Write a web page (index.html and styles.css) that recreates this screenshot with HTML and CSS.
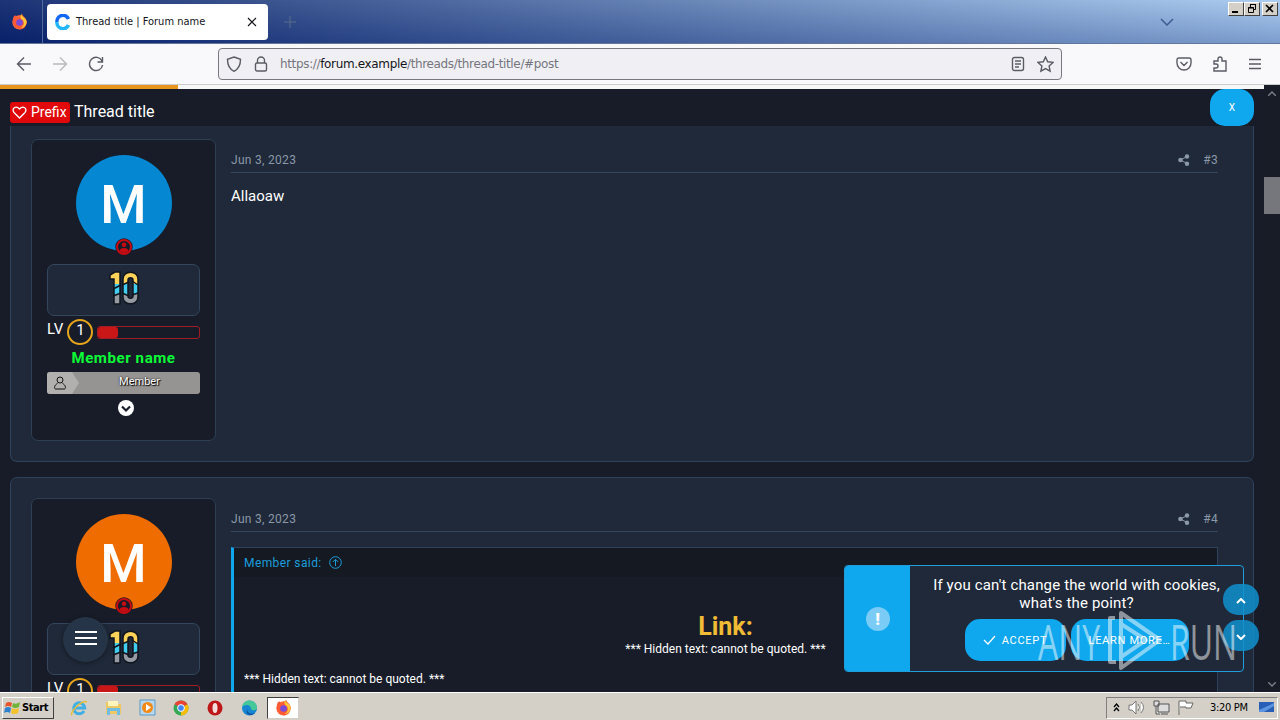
FILE: index.html
```html
<!DOCTYPE html>
<html lang="en">
<head>
    <meta charset="UTF-8">
    <meta name="viewport" content="width=device-width, initial-scale=1.0">
    <title>Forum thread</title>
    <link rel="stylesheet" href="styles.css">
</head>
<body>
    <svg class="defs" width="0" height="0">
        <symbol id="firefox" viewBox="0 0 18 18">
            <circle cx="9" cy="10" r="7.5" fill="#ff7139"/>
            <path d="M2 7C2 4 4 2 5 3l2 2c2-1 3-3 5-4 0 3 5 4 4.500 9C16 15 12 18 8 17 4 16 1 12 2 7z" fill="#ff5a36"/>
            <path d="M11 1c0 3 5 4 5.500 8 0 4-3 7-6 7 4-3 4-7 1-9-2-2-2-4-.5-6z" fill="#ffc738"/>
            <circle cx="9" cy="10" r="3.500" fill="#7a4bd8"/>
        </symbol>
        <symbol id="share" viewBox="0 0 12 12">
            <path d="M2.500 6L9 2.500M2.500 6L9 9.500" stroke="currentColor"/>
            <g fill="currentColor"><circle cx="2.500" cy="6" r="2.300"/><circle cx="9" cy="2.500" r="2.200"/><circle cx="9" cy="9.700" r="2.200"/></g>
        </symbol>
        <symbol id="online" viewBox="0 0 18 18">
            <circle cx="9" cy="9" r="8.700" fill="#171c28"/>
            <circle cx="9" cy="9" r="7" fill="#171c28" stroke="#c70b12" stroke-width="2"/>
            <circle cx="9" cy="6.800" r="2.300" fill="#c70b12"/>
            <path d="M4.500 13c0-4 9-4 9 0-2 2.500-7 2.500-9 0z" fill="#c70b12"/>
        </symbol>
        <symbol id="ten" viewBox="0 0 30 36">
            <defs>
                <linearGradient id="tenFill" x1="0" y1="0" x2="0" y2="36" gradientUnits="userSpaceOnUse">
                    <stop offset=".4" stop-color="#ffd25a"/><stop offset=".4" stop-color="#41cdf0"/>
                    <stop offset=".68" stop-color="#41cdf0"/><stop offset=".68" stop-color="#969ba3"/>
                </linearGradient>
            </defs>
            <path d="M1 5l5-3h5v32H5V9H1z" fill="url(#tenFill)" stroke="#10151e" stroke-width="1.500"/>
            <path d="M14 9c0-9 15-9 15 0v18c0 9-15 9-15 0zM19 10v16c0 3 5 3 5 0V10c0-3-5-3-5 0z" fill="url(#tenFill)" fill-rule="evenodd" stroke="#10151e" stroke-width="1.500"/>
            <path d="M4 19l8-4M13 15l7-3M23 11l6 4M4 26l8-3M13 23l7 3M23 25l6-2" stroke="#10151e" stroke-width="1.500"/>
        </symbol>
    </svg>

    <header class="tabbar">
        <div class="pinned"><svg width="17" height="17"><use href="#firefox"/></svg></div>
        <div class="tab">
            <svg width="16" height="16" viewBox="0 0 16 16" fill="none" stroke-width="3.500">
                <path d="M13.500 5A6 6 0 0 0 2 8" stroke="#1268f3"/>
                <path d="M2 8a6 6 0 0 0 11.500 3" stroke="#21b7fa"/>
            </svg>
            <span class="tab-title">Thread title | Forum name</span>
            <svg width="10" height="10" viewBox="0 0 10 10" stroke="#15141a" stroke-width="1.200"><path d="M1 1l8 8M9 1L1 9"/></svg>
        </div>
        <svg class="new-tab" width="12" height="12" viewBox="0 0 12 12" stroke="#5b6c8c"><path d="M6 0v12M0 6h12"/></svg>
        <svg class="all-tabs" width="14" height="8" viewBox="0 0 14 8" fill="none" stroke="#3f5c92" stroke-width="1.500"><path d="M1 1l6 6 6-6"/></svg>
        <div class="window-buttons">
            <span><svg width="14" height="12" viewBox="0 0 14 12" stroke="#000" stroke-width="2"><path d="M3 9h6"/></svg></span>
            <span><svg width="14" height="12" viewBox="0 0 14 12" fill="none" stroke="#000"><path d="M5.500 4.500v-3h5v5h-2M5 1.500h6M3.500 4.500h5v5h-5zM3 5h6"/></svg></span>
            <span class="close"><svg width="14" height="12" viewBox="0 0 14 12" stroke="#000" stroke-width="1.600"><path d="M3 2l7 7M10 2L3 9"/></svg></span>
        </div>
    </header>

    <nav class="toolbar">
        <div class="nav-icons">
            <svg width="16" height="16" viewBox="0 0 16 16"><path d="M15 8H1.500M8 1.500L1.500 8 8 14.500"/></svg>
            <svg class="disabled" width="16" height="16" viewBox="0 0 16 16"><path d="M1 8h13.500M8 1.500L14.500 8 8 14.500"/></svg>
            <svg width="16" height="16" viewBox="0 0 16 16"><path d="M14 5A6.600 6.600 0 1 0 14.600 9M14.500 1v5h-5"/></svg>
        </div>
        <div class="urlbar">
            <svg width="16" height="16" viewBox="0 0 16 16"><path d="M8 1l6.500 2.300C14.500 9 13 13 8 15.300 3 13 1.500 9 1.500 3.300z"/></svg>
            <svg width="14" height="16" viewBox="0 0 14 16"><path d="M3.500 7V4.500a3.500 3.500 0 0 1 7 0V7"/><rect x="1.500" y="7" width="11" height="8" rx="1.500"/></svg>
            <span class="url">https://<b>forum.example</b>/threads/thread-title/#post</span>
            <svg width="14" height="16" viewBox="0 0 14 16"><rect x="1.500" y="1.500" width="11" height="13" rx="2"/><path d="M4 5h6M4 8h6M4 11h4"/></svg>
            <svg width="17" height="17" viewBox="0 0 17 17"><path d="M8.500 1l2.200 4.800 5.300.6-3.900 3.600 1 5.200-4.600-2.600-4.600 2.600 1-5.200L1 6.400l5.300-.6z"/></svg>
        </div>
        <div class="nav-icons right">
            <svg width="16" height="16" viewBox="0 0 16 16"><path d="M3 2h10q2 0 2 2v3a7 7 0 0 1-14 0V4q0-2 2-2zM4.500 6L8 9.500 11.500 6"/></svg>
            <svg width="16" height="16" viewBox="0 0 16 16"><path d="M2 5h4V3a2 2 0 0 1 4 0v2h4v10H2v-3h2a2 2 0 0 0 0-4H2z"/></svg>
            <svg width="14" height="14" viewBox="0 0 14 14"><path d="M1 2.500h12M1 7h12M1 11.500h12"/></svg>
        </div>
    </nav>

    <main class="viewport">
        <div class="page">
            <div class="progress"><div class="progress-fill"></div></div>
            <div class="thread-bar">
                <span class="prefix"><svg width="15" height="13" viewBox="0 0 15 13" fill="none" stroke="#fff" stroke-width="1.300"><path d="M7.500 12L2 6.500C-1 2.500 4-1 7.500 3 11-1 16 2.500 13 6.500z"/></svg>Prefix</span>
                <span class="thread-title">Thread title</span>
                <button class="bar-close">X</button>
            </div>

            <article class="post first">
                <aside class="user">
                    <div class="avatar blue">M<svg class="status" width="18" height="18"><use href="#online"/></svg></div>
                    <div class="badges"><svg width="30" height="36"><use href="#ten"/></svg></div>
                    <div class="level"><span>LV</span><span class="level-number">1</span><div class="level-bar"><div></div></div></div>
                    <div class="username">Member name</div>
                    <div class="banner">
                        <div class="banner-icon"><svg width="12" height="14" viewBox="0 0 12 14" fill="none" stroke="#111"><circle cx="6" cy="4" r="3"/><path d="M3.500 7.500C0 9 0 13 1.500 13h9C12 13 12 9 8.500 7.500"/></svg></div>
                        <span>Member</span>
                    </div>
                    <svg class="expand" width="16" height="16" viewBox="0 0 16 16"><circle cx="8" cy="8" r="8" fill="#fff"/><path d="M4 6.500l4 4 4-4" fill="none" stroke="#171c28" stroke-width="2.200"/></svg>
                </aside>
                <section class="message">
                    <div class="message-head"><span>Jun 3, 2023</span><svg width="12" height="12"><use href="#share"/></svg><span>#3</span></div>
                    <p class="message-text">Allaoaw</p>
                </section>
            </article>

            <article class="post second">
                <aside class="user">
                    <div class="avatar orange">M<svg class="status" width="18" height="18"><use href="#online"/></svg></div>
                    <div class="badges"><svg width="30" height="36"><use href="#ten"/></svg></div>
                    <div class="level"><span>LV</span><span class="level-number">1</span><div class="level-bar"><div></div></div></div>
                </aside>
                <section class="message">
                    <div class="message-head"><span>Jun 3, 2023</span><svg width="12" height="12"><use href="#share"/></svg><span>#4</span></div>
                    <blockquote class="quote">
                        <div class="quote-head">Member said: <svg width="13" height="13" viewBox="0 0 13 13" fill="none" stroke="currentColor"><circle cx="6.500" cy="6.500" r="5.800"/><path d="M6.500 10V3.500M3.800 6l2.700-2.700L9.200 6"/></svg></div>
                        <div class="quote-link">Link:</div>
                        <div class="hidden-text centered">*** Hidden text: cannot be quoted. ***</div>
                        <div class="hidden-text">*** Hidden text: cannot be quoted. ***</div>
                    </blockquote>
                </section>
            </article>
        </div>

        <div class="scrollbar">
            <svg width="8" height="5" viewBox="0 0 8 5"><path d="M0 5l4-4 4 4"/></svg>
            <div class="thumb"></div>
            <svg width="8" height="5" viewBox="0 0 8 5"><path d="M0 0l4 4 4-4"/></svg>
        </div>

        <button class="menu-button"><svg width="22" height="16" viewBox="0 0 22 16" stroke="#fff" stroke-width="2"><path d="M0 2h22M0 8h22M0 14h22"/></svg></button>

        <div class="cookie">
            <div class="cookie-icon"><span>!</span></div>
            <div class="cookie-body">
                <p>If you can't change the world with cookies,<br>what's the point?</p>
                <div class="cookie-buttons">
                    <button class="accept"><svg width="13" height="10" viewBox="0 0 13 10" fill="none" stroke="#fff" stroke-width="1.300"><path d="M1 5l4 4 7-8"/></svg>ACCEPT</button>
                    <button class="learn">LEARN MORE…</button>
                </div>
            </div>
        </div>

        <div class="jump">
            <button><svg width="10" height="6" viewBox="0 0 10 6"><path d="M1 5l4-4 4 4"/></svg></button>
            <button><svg width="10" height="6" viewBox="0 0 10 6"><path d="M1 1l4 4 4-4"/></svg></button>
        </div>

        <div class="watermark">
            <span>ANY</span>
            <svg width="58" height="62" viewBox="0 0 58 62" fill="none" stroke="#fff" stroke-width="4" stroke-linejoin="round"><path d="M9 8H4v44h6M15 3l39 27-39 28zM15 14v33l25-17z"/></svg>
            <span>RUN</span>
        </div>
    </main>

    <footer class="taskbar">
        <button class="start">
            <svg width="17" height="15" viewBox="0 0 17 15"><path d="M2 3q3-2 6 0L7 7q-3-2-6 0z" fill="#e8542b"/><path d="M9 3q3 2 7-1l-1 5q-4 2-7 0z" fill="#72b43a"/><path d="M1 8q3-2 6 0l-1 5q-3-2-6 0z" fill="#2e81cf"/><path d="M8 8q3 2 7 0l-1 5q-4 2-7 0z" fill="#f4c22c"/></svg>
            Start
        </button>
        <div class="apps">
            <span><svg width="18" height="18" viewBox="0 0 18 18" fill="none"><path d="M14 12a5.500 5.500 0 1 1 .7-3H5" stroke="#41aee4" stroke-width="3"/><path d="M2 16C-1 13 13 0 17 3" stroke="#e8bd38" stroke-width="1.500"/></svg></span>
            <span><svg width="17" height="17" viewBox="0 0 17 17"><path d="M1 3h6l1 2h8v10H1z" fill="#eec963"/><path d="M3 2h10v5H3z" fill="#fff4bb"/><path d="M2 9h13v7h-3v-4H5v4H2z" fill="#72bde4"/></svg></span>
            <span><svg width="17" height="17" viewBox="0 0 17 17"><path d="M1 1h15v15H1z" fill="#b8d7eb" stroke="#5899c8"/><circle cx="8.500" cy="8.500" r="5.500" fill="#f18a19"/><path d="M7 5l5 3.500L7 12z" fill="#fff"/></svg></span>
            <span><svg width="16" height="16" viewBox="0 0 16 16"><circle cx="8" cy="8" r="7.500" fill="#34a853"/><path d="M1.500 4.250A7.500 7.500 0 0 1 14.500 4.250L8 8z" fill="#ea4335"/><path d="M14.500 4.250A7.500 7.500 0 0 1 8 15.500V8z" fill="#fbbc05"/><circle cx="8" cy="8" r="3.400" fill="#4285f4" stroke="#fff"/></svg></span>
            <span><svg width="16" height="16" viewBox="0 0 16 16"><circle cx="8" cy="8" r="7.500" fill="#bd1719"/><ellipse cx="8" cy="8" rx="2.500" ry="5" fill="#f5dddd"/></svg></span>
            <span><svg width="17" height="16" viewBox="0 0 17 16"><circle cx="8.500" cy="8" r="7.500" fill="#1686d1"/><path d="M1 7C3-2 15-1 16 7c0 4-5 4-6 2C10 4 4 4 1 7z" fill="#45c898"/><path d="M6 9c0 4 4 6 8 4-4 4-10 2-8-4z" fill="#0b4c9b"/></svg></span>
            <span class="active"><svg width="17" height="17"><use href="#firefox"/></svg></span>
        </div>
        <div class="tray">
            <svg width="7" height="9" viewBox="0 0 7 9" fill="none" stroke="#000" stroke-width="1.300"><path d="M1 4l2.500-3L6 4M1 8l2.500-3L6 8"/></svg>
            <svg width="17" height="15" viewBox="0 0 17 15" fill="#fff" stroke="#777"><path d="M1 5h3l4-4v13l-4-4H1zM10 4q3 3 0 7M13 2q5 5 0 11"/></svg>
            <svg width="17" height="16" viewBox="0 0 17 16" fill="#ddd" stroke="#555"><path d="M5 4h11v8H5zM8 14h7M1 1h5v5H1zM3 6v8h4"/></svg>
            <svg width="16" height="15" viewBox="0 0 16 15" fill="#fff" stroke="#666"><path d="M1 15V1h7v2h7l-2 5H8V7H2"/></svg>
            <span>3:20 PM</span>
            <svg width="15" height="13" viewBox="0 0 15 13"><path d="M0 1h15v10H0z" fill="#285eb5"/><path d="M0 9L15 2v3L5 11H0z" fill="#5b95df"/></svg>
        </div>
    </footer>
</body>
</html>
```

FILE: styles.css
```css
* {
    margin: 0;
    padding: 0;
    box-sizing: border-box;
}

body {
    width: 1280px;
    height: 720px;
    overflow: hidden;
    display: flex;
    flex-direction: column;
    font-family: Roboto, Arial, sans-serif;
    color: #fff;
    background: #171c28;
}

svg {
    flex-shrink: 0;
}

button {
    border: none;
    color: #fff;
    font-family: inherit;
}

.defs {
    position: absolute;
}

/* browser window */
.tabbar {
    height: 44px;
    display: flex;
    align-items: center;
    background: linear-gradient(to bottom, rgba(255, 255, 255, 0.08), rgba(0, 20, 100, 0.25)), linear-gradient(to right, #0a246a, #a6caf0);
    border-bottom: 1px solid #62779e;
}

.pinned {
    width: 43px;
    height: 43px;
    padding: 13px 0 0 11px;
    border-right: 1px solid #536a9d;
}

.tab {
    width: 221px;
    height: 36px;
    margin-left: 4px;
    padding: 0 11px 0 8px;
    display: flex;
    align-items: center;
    background: #fff;
    border-radius: 4px;
    color: #15141a;
}

.tab-title {
    flex: 1;
    padding-left: 5px;
    font: 11px "DejaVu Sans Condensed", "DejaVu Sans", sans-serif;
}

.new-tab {
    margin-left: 16px;
}

.all-tabs {
    margin-left: auto;
}

.window-buttons {
    display: flex;
    align-self: flex-start;
    padding: 2px 2px 0 0;
    margin-left: 54px;
}

.window-buttons span {
    width: 16px;
    height: 14px;
    background: #d4d0c8;
    border: 1px solid;
    border-color: #fff #404040 #404040 #fff;
}

.window-buttons svg {
    display: block;
}

.window-buttons .close {
    margin-left: 2px;
}

.toolbar {
    height: 41px;
    display: flex;
    align-items: center;
    background: #f9f9fb;
    border-bottom: 1px solid #ccccd0;
}

.toolbar svg {
    fill: none;
    stroke: #5b5b66;
    stroke-width: 1.4;
}

.nav-icons {
    width: 218px;
    padding-left: 16px;
    display: flex;
    gap: 20px;
}

.nav-icons .disabled {
    opacity: 0.4;
}

.nav-icons.right {
    padding-left: 114px;
    align-items: center;
}

.urlbar {
    width: 844px;
    height: 32px;
    padding: 0 7px;
    display: flex;
    align-items: center;
    gap: 12px;
    background: #f0f0f4;
    border: 1px solid #77777f;
    border-radius: 4px;
}

.url {
    flex: 1;
    font: 12px "DejaVu Sans", sans-serif;
    letter-spacing: -0.35px;
    color: #75757e;
}

.url b {
    font-weight: normal;
    color: #15141a;
}

/* forum page */
.viewport {
    position: relative;
    height: 607px;
    display: flex;
    overflow: hidden;
}

.page {
    width: 1264px;
    background: #171c28;
}

.progress {
    height: 4px;
    background: #f7f7f8;
}

.progress-fill {
    width: 178px;
    height: 4px;
    background: #e8951d;
}

.thread-bar {
    height: 37px;
    padding: 0 10px;
    display: flex;
    align-items: center;
    background: #171c28;
}

.prefix {
    height: 21px;
    padding: 0 2px;
    margin-top: 9px;
    display: flex;
    width: 60px;
    align-items: center;
    gap: 4px;
    background: #e00808;
    border-radius: 3px;
    font-size: 14px;
}

.thread-title {
    margin: 8px auto 0 4px;
    font-size: 16px;
}

.bar-close {
    width: 44px;
    height: 37px;
    background: #0fa7ee;
    border-radius: 15px;
    font-size: 10px;
}

.post {
    width: 1244px;
    margin-left: 10px;
    padding: 20px;
    display: flex;
    gap: 15px;
    background: #1f2939;
    border: 1px solid #2e435b;
    border-radius: 7px;
}

.first {
    height: 336px;
    padding-top: 13px;
    border-top: none;
    border-radius: 0 0 7px 7px;
}

.second {
    height: 360px;
    margin-top: 15px;
}

.user {
    width: 185px;
    height: 302px;
    padding: 15px;
    display: flex;
    flex-direction: column;
    align-items: center;
    background: #171c28;
    border: 1px solid #2e3f53;
    border-radius: 7px;
}

.avatar {
    position: relative;
    width: 96px;
    height: 96px;
    display: flex;
    align-items: center;
    justify-content: center;
    flex-shrink: 0;
    border-radius: 50%;
    font-size: 53px;
    font-weight: 500;
    line-height: 96px;
    padding-top: 3px;
}

.blue {
    background: #0588d1;
}

.orange {
    background: #ef6c00;
}

.status {
    position: absolute;
    left: 39px;
    bottom: -5px;
}

.badges {
    width: 153px;
    height: 52px;
    margin-top: 13px;
    padding-top: 5px;
    flex-shrink: 0;
    text-align: center;
    background: #1f2939;
    border: 1px solid #34465b;
    border-radius: 7px;
}

.level {
    width: 153px;
    height: 26px;
    margin-top: 3px;
    display: flex;
    flex-shrink: 0;
    font-size: 15px;
    line-height: 20px;
}

.level-number {
    width: 26px;
    height: 26px;
    margin: 0 4px;
    border: 2px solid #e6a51a;
    border-radius: 50%;
    text-align: center;
    line-height: 18px;
}

.level-bar {
    flex: 1;
    height: 13px;
    margin-top: 7px;
    border: 1px solid #a01d27;
    border-radius: 3px;
}

.level-bar div {
    width: 20px;
    height: 11px;
    background: #c91717;
    border-radius: 3px;
}

.username {
    margin-top: 4px;
    font-size: 15px;
    font-weight: bold;
    line-height: 18px;
    letter-spacing: 0.6px;
    color: #0cfc37;
}

.banner {
    width: 153px;
    height: 22px;
    margin-top: 5px;
    display: flex;
    background: #969493;
    border-radius: 3px;
    overflow: hidden;
    font-size: 11px;
    line-height: 19px;
}

.banner-icon {
    width: 32px;
    padding: 4px 0 0 7px;
    background: #b2b0af;
    clip-path: polygon(0 0, 78% 0, 100% 50%, 78% 100%, 0 100%);
}

.banner-icon svg {
    display: block;
}

.banner span {
    flex: 1;
    text-align: center;
    text-shadow: 0 0 2px #000, 1px 1px 1px #000;
}

.expand {
    margin: 6px 0 0 4px;
}

.message {
    flex: 1;
    padding-right: 15px;
}

.message-head {
    height: 34px;
    padding-top: 8px;
    display: flex;
    align-items: center;
    gap: 13px;
    border-bottom: 1px solid #34465b;
    font-size: 12px;
    letter-spacing: 0.3px;
    color: #8b98a8;
}

.message-head span:first-child {
    margin-right: auto;
}

.message-text {
    margin-top: 14px;
    font-size: 15px;
    line-height: 18px;
}

.quote {
    height: 200px;
    margin-top: 15px;
    background: #171c28;
    border: 1px solid #2e435b;
    border-left: 3px solid #0fa7ee;
}

.quote-head {
    height: 29px;
    padding-left: 10px;
    display: flex;
    align-items: center;
    gap: 7px;
    background: #141922;
    font-size: 12px;
    letter-spacing: 0.4px;
    color: #1c9ddb;
}

.quote-link {
    height: 29px;
    margin-top: 35px;
    text-align: center;
    font-size: 25px;
    font-weight: bold;
    line-height: 29px;
    color: #f0bb35;
}

.hidden-text {
    padding-left: 10px;
    font-size: 12px;
    line-height: 16px;
}

.hidden-text + .hidden-text {
    margin-top: 14px;
}

.centered {
    padding-left: 0;
    text-align: center;
}

.scrollbar {
    width: 16px;
    padding: 6px 0 5px;
    display: flex;
    flex-direction: column;
    align-items: center;
    background: #171c26;
}

.scrollbar svg {
    fill: none;
    stroke: #777c84;
    stroke-width: 1.5;
}

.thumb {
    width: 16px;
    height: 37px;
    margin: 81px 0 auto;
    background: #76777c;
}

/* floating controls */
.menu-button {
    position: absolute;
    left: 63px;
    top: 532px;
    width: 45px;
    height: 45px;
    border-radius: 50%;
    background: #263447;
    box-shadow: 0 1px 5px rgba(0, 0, 0, 0.4);
}

.cookie {
    position: absolute;
    left: 844px;
    top: 480px;
    width: 400px;
    height: 107px;
    display: flex;
    background: #1f2939;
    border: 1px solid #209ddb;
    border-radius: 4px;
    overflow: hidden;
}

.cookie-icon {
    width: 65px;
    display: flex;
    align-items: center;
    justify-content: center;
    background: #0fa7ee;
}

.cookie-icon span {
    width: 24px;
    height: 24px;
    border-radius: 50%;
    background: #7accf7;
    text-align: center;
    font-size: 17px;
    font-weight: 900;
    line-height: 24px;
}

.cookie-body {
    flex: 1;
    padding-top: 10px;
    text-align: center;
}

.cookie-body p {
    font-size: 15px;
    line-height: 18px;
    letter-spacing: 0.15px;
    white-space: nowrap;
}

.cookie-buttons {
    margin-top: 7px;
    display: flex;
    justify-content: center;
    gap: 5px;
}

.cookie-buttons button {
    height: 42px;
    display: flex;
    align-items: center;
    justify-content: center;
    gap: 6px;
    border-radius: 15px;
    background: #0fa7ee;
    font-size: 11px;
    letter-spacing: 0.7px;
}

.accept {
    width: 101px;
}

.learn {
    width: 118px;
}

.jump {
    position: absolute;
    left: 1223px;
    top: 499px;
    display: flex;
    flex-direction: column;
    gap: 5px;
}

.jump button {
    width: 36px;
    height: 31px;
    border-radius: 15px;
    background: rgba(16, 145, 207, 0.85);
}

.jump svg {
    fill: none;
    stroke: #fff;
    stroke-width: 2;
}

.watermark {
    position: absolute;
    left: 1038px;
    top: 524px;
    width: 194px;
    height: 64px;
    display: flex;
    align-items: center;
    justify-content: space-between;
    opacity: 0.5;
}

.watermark span {
    width: 62px;
    font: 50px/64px "Open Sans", sans-serif;
    transform: scaleX(0.64);
    transform-origin: left;
}

/* windows taskbar */
.taskbar {
    height: 28px;
    padding: 2px 2px 0;
    display: flex;
    align-items: center;
    background: #d4d0c8;
    border-top: 1px solid #fff;
    color: #000;
}

.start {
    width: 52px;
    height: 22px;
    display: flex;
    align-items: center;
    gap: 1px;
    padding-left: 1px;
    background: #d4d0c8;
    border: 1px solid;
    border-color: #fff #404040 #404040 #fff;
    color: #000;
    font: bold 11px "DejaVu Sans Condensed", "DejaVu Sans", sans-serif;
    letter-spacing: -0.4px;
}

.apps {
    margin-left: 9px;
    display: flex;
    gap: 2px;
}

.apps span {
    width: 32px;
    height: 22px;
    display: flex;
    align-items: center;
    justify-content: center;
}

.apps .active {
    background: #fff;
    border: 1px solid;
    border-color: #404040 #d4d0c8 #d4d0c8 #404040;
}

.tray {
    width: 172px;
    height: 22px;
    margin-left: auto;
    padding-left: 6px;
    display: flex;
    align-items: center;
    gap: 8px;
    border: 1px solid;
    border-color: #808080 #fff #fff #808080;
}

.tray span {
    margin: 0 3px 0 8px;
    white-space: nowrap;
    font: 11px "DejaVu Sans Condensed", "DejaVu Sans", sans-serif;
    letter-spacing: -0.3px;
}
```
